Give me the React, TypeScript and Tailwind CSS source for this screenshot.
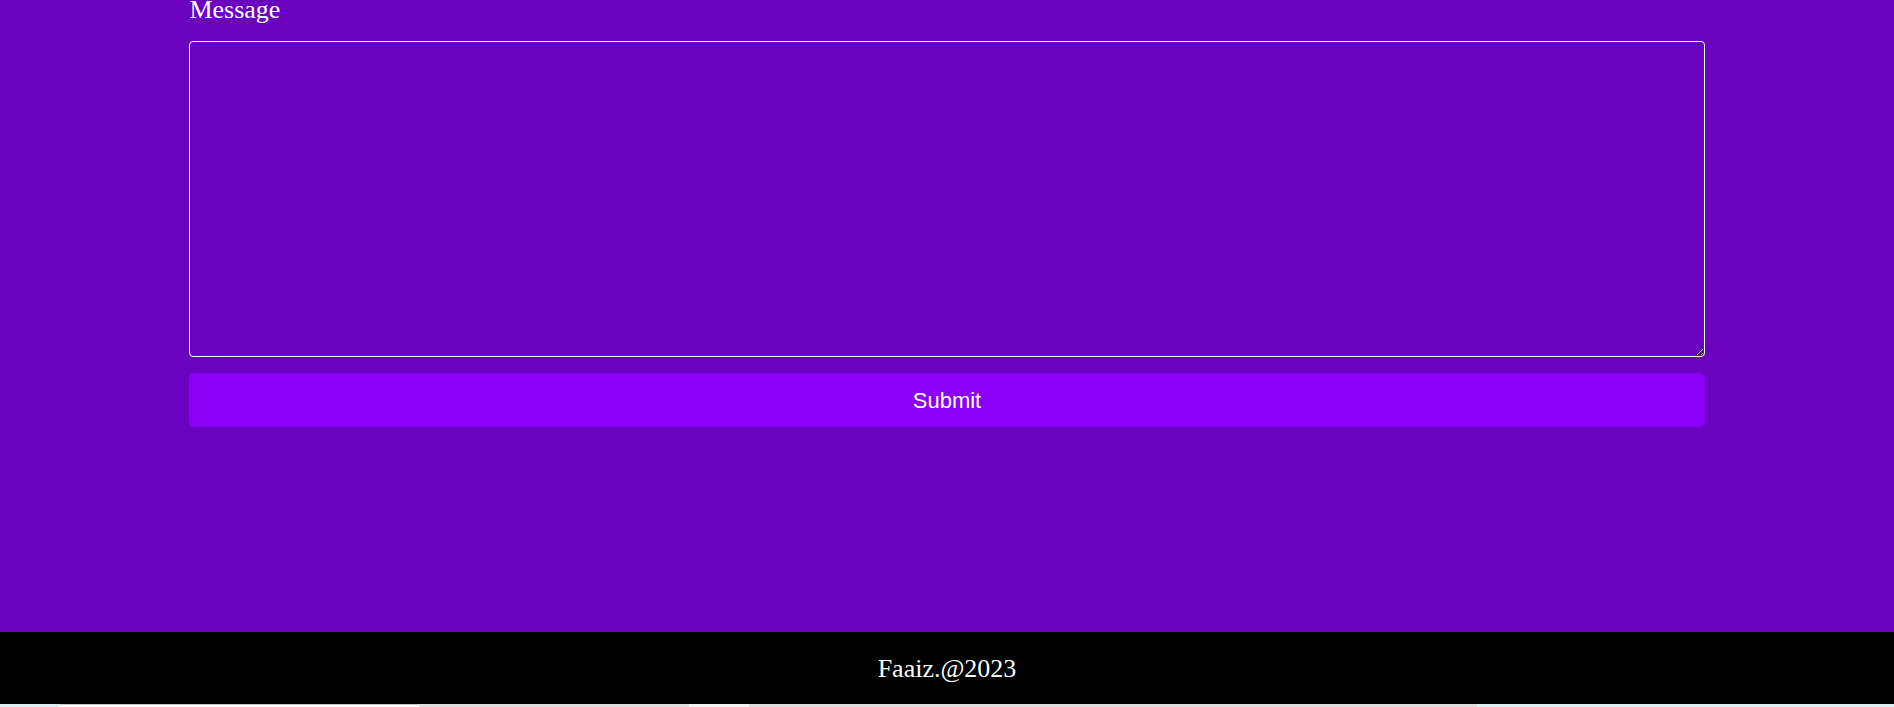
import React from "react";

export default function App() {
  return (
    <div className="flex flex-col w-full h-[707px] overflow-hidden">
      <main className="flex flex-col h-[632px] bg-[#6b02bf] shrink-0">
        <div className="w-4/5 mx-auto flex flex-col">
          <label
            htmlFor="msg"
            className="-mt-[5px] block text-[26px] leading-[30px] text-white"
            style={{ fontFamily: '"Liberation Serif", "Times New Roman", serif' }}
          >
            Message
          </label>
          <textarea
            id="msg"
            className="mt-[16px] h-[316px] w-full rounded border border-white bg-transparent text-white p-2 outline-none"
          />
          <button
            className="mt-[16px] h-[54px] w-full rounded-[6px] bg-[#8a00f5] text-white text-[22px]"
            style={{ fontFamily: '"Liberation Sans", Arial, sans-serif' }}
          >
            Submit
          </button>
        </div>
      </main>
      <footer
        className="h-[72px] shrink-0 bg-black flex items-center justify-center text-white text-[26px]"
        style={{ fontFamily: '"Liberation Serif", "Times New Roman", serif' }}
      >
        Faaiz.@2023
      </footer>
      <div className="flex h-[3px] shrink-0">
        <div className="w-[60px] bg-[#dbeef0]" />
        <div className="w-[359px] bg-white border-t border-[#c8c8c8]" />
        <div className="w-[270px] bg-[#dedede]" />
        <div className="w-[60px] bg-[#f2f2f2]" />
        <div className="w-[728px] bg-[#dcdcdc]" />
        <div className="flex-1 bg-[#dbeef0]" />
      </div>
    </div>
  );
}
